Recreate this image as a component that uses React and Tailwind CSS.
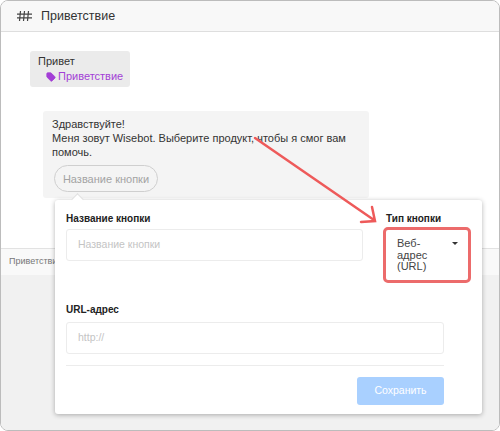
import { Tag } from "lucide-react";

const App = () => {
  return (
    <div className="relative w-[500px] h-[431px] bg-white overflow-hidden font-['Liberation_Sans',Arial,sans-serif]">
      <div className="w-[500px] h-[431px] flex flex-col border border-[#bcbcbc] rounded-lg overflow-hidden">
        {/* header */}
        <div className="h-[31px] shrink-0 flex items-center gap-[9px] pl-[16px] bg-[#f8f8f8] border-b border-[#dedede]">
          <svg width="15" height="10" viewBox="0 0 15 10" fill="none" stroke="#444" strokeWidth="1.2">
            <path d="M3.5 0L2.5 10M7.5 0L6.5 10M11.5 0L10.5 10M0 3.2H15M0 6.8H15" />
          </svg>
          <span className="text-[12.5px] text-[#333]">Приветствие</span>
        </div>

        {/* chat */}
        <div className="h-[216px] shrink-0 bg-white flex flex-col items-start pt-[19px] pl-[29px]">
          <div className="w-[100px] h-[36px] bg-[#ebebeb] rounded-[3px] pt-[3px] pl-[8px] text-[11px] leading-[15px] text-[#333]">
            <div>Привет</div>
            <div className="flex items-center gap-[2px] pl-[8px] text-[#a33fd6]">
              <Tag size={10} fill="#a33fd6" stroke="#a33fd6" />
              <span>Приветствие</span>
            </div>
          </div>
          <div className="mt-[24px] ml-[13px] w-[326px] h-[87px] bg-[#f4f4f4] rounded-[3px] pt-[6px] pl-[9px] text-[11px] leading-[14px] text-[#333]">
            <div>Здравствуйте!</div>
            <div className="whitespace-nowrap">Меня зовут Wisebot. Выберите продукт, чтобы я смог вам</div>
            <div>помочь.</div>
            <div className="mt-[6px] ml-[2px] w-[104px] h-[27px] flex items-center justify-center rounded-full border border-[#cfcfcf] text-[#a3a3a3]">
              Название кнопки
            </div>
          </div>
        </div>

        {/* bottom bar */}
        <div className="h-[27px] shrink-0 flex items-center pl-[8px] bg-[#f9f9f9] border-t border-[#e2e2e2] text-[9px] text-[#777]">
          Приветствие
        </div>
        <div className="flex-1 bg-[#f1f1f1]" />
      </div>

      {/* popover */}
      <div className="absolute left-[55px] top-[200px] w-[427px] h-[214px] bg-white rounded-[3px] shadow-[0_1px_5px_rgba(0,0,0,0.3)] px-[11px] pt-[12px]">
        <div className="absolute left-[18px] top-[-5px] w-[9px] h-[9px] rotate-45 bg-white border-l border-t border-[#dedede]" />
        <div className="flex">
          <div className="w-[298px]">
            <div className="text-[10px] leading-[14px] font-bold text-[#222]">Название кнопки</div>
            <div className="mt-[3px] h-[32px] flex items-center pl-[11px] border border-[#ececec] rounded-[3px] text-[10.5px] text-[#c4c4c4]">
              Название кнопки
            </div>
          </div>
          <div className="ml-[23px] w-[85px]">
            <div className="text-[10px] leading-[14px] font-bold text-[#222]">Тип кнопки</div>
            <div className="relative mt-[1px] -ml-[3px] h-[56px] w-[88px] border-[3px] border-[#ec6b6b] rounded-[5px] pl-[11px] pt-[8px] text-[11px] leading-[11.5px] text-[#444]">
              <div>Веб-</div>
              <div>адрес</div>
              <div>(URL)</div>
              <div className="absolute right-[10px] top-[12px] border-x-[3px] border-x-transparent border-t-[3px] border-t-[#333]" />
            </div>
          </div>
        </div>
        <div className="mt-[20px] w-[378px]">
          <div className="text-[10px] leading-[14px] font-bold text-[#222]">URL-адрес</div>
          <div className="mt-[5px] h-[32px] flex items-center pl-[11px] border border-[#ececec] rounded-[3px] text-[10.5px] text-[#c4c4c4]">
            http://
          </div>
          <div className="mt-[11px] border-t border-[#ececec]" />
          <div className="mt-[11px] flex justify-end">
            <div className="w-[87px] h-[28px] flex items-center justify-center rounded-[3px] bg-[#a9d0ff] text-[10.5px] text-white">
              Сохранить
            </div>
          </div>
        </div>
      </div>

      {/* arrow */}
      <svg className="absolute left-0 top-0 pointer-events-none" width="500" height="431" fill="none" stroke="#ee5a5a" strokeWidth="2.5" strokeLinecap="round">
        <path d="M255 138L374 220M372 207L375 221L361 222" />
      </svg>
    </div>
  );
};

export default App;
